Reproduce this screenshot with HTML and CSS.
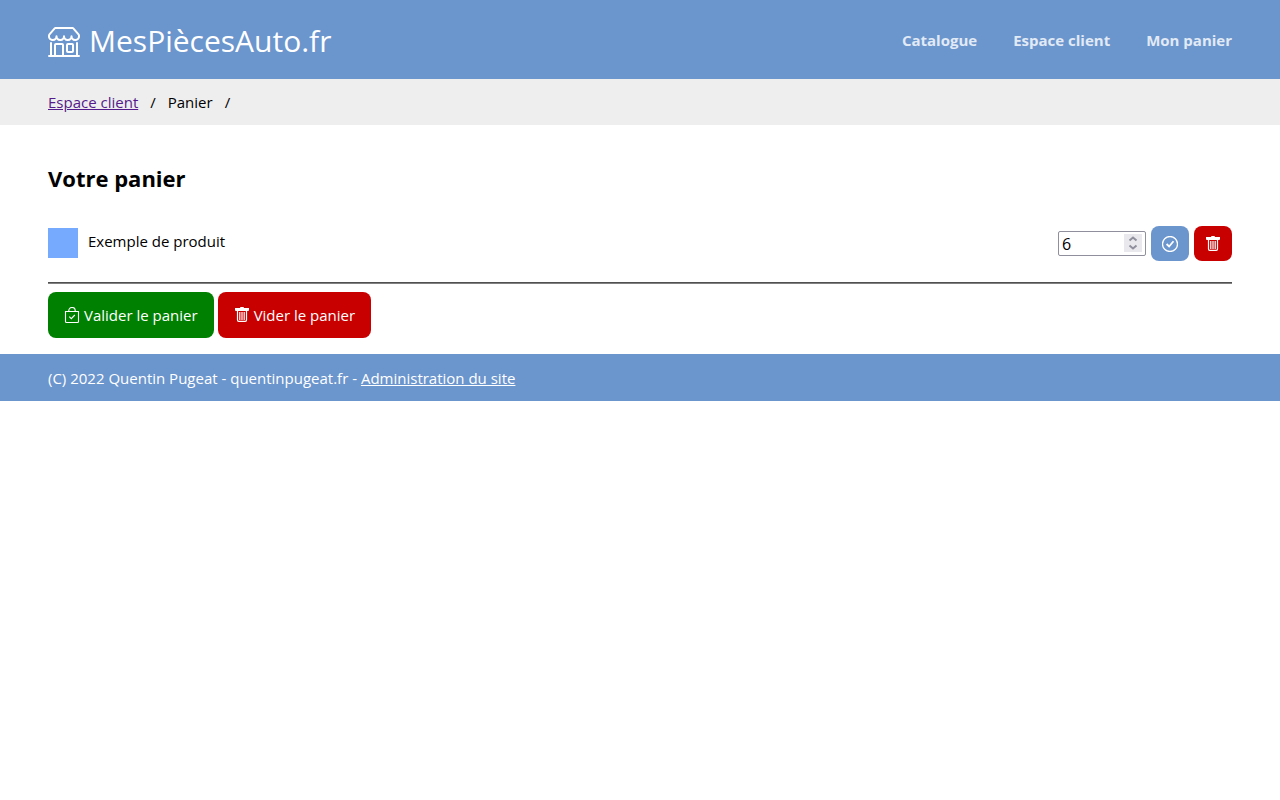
FILE: index.html
```html
<!DOCTYPE html>
<html lang="fr">
<head>
<meta charset="utf-8">
<meta name="viewport" content="width=device-width, initial-scale=1">
<title>MesPiècesAuto.fr</title>
<link rel="stylesheet" href="styles.css">
</head>
<body>
<svg class="sprite" aria-hidden="true">
  <symbol id="trash" viewBox="0 0 16 16">
    <path fill="currentColor" d="M1 1h5a1 1 0 0 1 1-1h2a1 1 0 0 1 1 1h5v2a1 1 0 0 1-1 1H2a1 1 0 0 1-1-1z"/>
    <path fill="none" stroke="currentColor" stroke-width="1.2" d="M3.5 3.5V13q0 1.3 1.2 1.3h6.6q1.2 0 1.2-1.3V3.5M5.8 5v8M8 5v8M10.2 5v8"/>
  </symbol>
</svg>
<header class="header">
  <a class="brand" href="#">
    <svg class="brand-icon" viewBox="0 0 16 16" fill="currentColor" aria-hidden="true"><path d="M2.97 1.35A1 1 0 0 1 3.73 1h8.54a1 1 0 0 1 .76.35l2.609 3.044A1.5 1.5 0 0 1 16 5.37v.255a2.375 2.375 0 0 1-4.25 1.458A2.371 2.371 0 0 1 9.875 8 2.37 2.37 0 0 1 8 7.083 2.37 2.37 0 0 1 6.125 8a2.37 2.37 0 0 1-1.875-.917A2.375 2.375 0 0 1 0 5.625V5.37a1.5 1.5 0 0 1 .361-.976l2.61-3.045zm1.78 4.275a1.375 1.375 0 0 0 2.75 0 .5.5 0 0 1 1 0 1.375 1.375 0 0 0 2.75 0 .5.5 0 0 1 1 0 1.375 1.375 0 1 0 2.75 0V5.37a.5.5 0 0 0-.12-.325L12.27 2H3.73L1.12 5.045A.5.5 0 0 0 1 5.37v.255a1.375 1.375 0 0 0 2.75 0 .5.5 0 0 1 1 0zM1.5 8.5A.5.5 0 0 1 2 9v6h1v-5a1 1 0 0 1 1-1h3a1 1 0 0 1 1 1v5h6V9a.5.5 0 0 1 1 0v6h.5a.5.5 0 0 1 0 1H.5a.5.5 0 0 1 0-1H1V9a.5.5 0 0 1 .5-.5zM4 15h3v-5H4v5zm5-5a1 1 0 0 1 1-1h2a1 1 0 0 1 1 1v3a1 1 0 0 1-1 1h-2a1 1 0 0 1-1-1v-3zm3 0h-2v3h2v-3z"/></svg>
    <span>MesPiècesAuto.fr</span>
  </a>
  <nav class="nav">
    <a href="#">Catalogue</a>
    <a href="#">Espace client</a>
    <a href="#">Mon panier</a>
  </nav>
</header>
<nav class="breadcrumb" aria-label="Fil d'Ariane">
  <a href="#">Espace client</a><span>/</span><span>Panier</span><span>/</span>
</nav>
<main class="main">
  <h1 class="title">Votre panier</h1>
  <div class="item">
    <span class="product">
      <span class="thumb"></span>
      <label class="name" for="qty">Exemple de produit</label>
    </span>
    <span class="qty">
      <input id="qty" class="qty-input" type="number" value="6">
      <svg class="spinner" viewBox="0 0 18 18" aria-hidden="true"><path d="M5.5 6.5 9 3.5l3.5 3M5.5 11.5l3.5 3 3.5-3"/></svg>
    </span>
    <button class="btn btn-small btn-blue" type="button" aria-label="Mettre à jour">
      <svg class="icon" viewBox="0 0 16 16" fill="none" stroke="currentColor" aria-hidden="true"><circle cx="8" cy="8" r="7.5" stroke-width="1.3"/><path stroke-width="1.8" d="m4.6 8 2.5 2.5 4.4-5.3"/></svg>
    </button>
    <button class="btn btn-small btn-red" type="button" aria-label="Supprimer">
      <svg class="icon" aria-hidden="true"><use href="#trash"/></svg>
    </button>
  </div>
  <hr class="rule">
  <div class="actions">
    <button class="btn btn-large btn-green" type="button">
      <svg class="icon" viewBox="0 0 16 16" fill="none" stroke="currentColor" aria-hidden="true"><path stroke-width="1.1" d="M1.5 4.5h13v10q0 1-1 1h-11q-1 0-1-1zM4.8 4.5V3.7a3.2 3.2 0 0 1 6.4 0v.8M5.3 9.6 7.3 11.6 10.8 8"/></svg>
      Valider le panier
    </button>
    <button class="btn btn-large btn-red" type="button">
      <svg class="icon" aria-hidden="true"><use href="#trash"/></svg>
      Vider le panier
    </button>
  </div>
</main>
<footer class="footer">(C) 2022 Quentin Pugeat - quentinpugeat.fr - <a href="#">Administration du site</a></footer>
</body>
</html>
```
FILE: styles.css
```css
* { box-sizing: border-box; }
body {
  margin: 0;
  background: #fff;
  color: #000;
  font: 15px/22px "Segoe UI", "Open Sans", sans-serif;
}
.sprite { display: none; }
.header {
  display: flex;
  align-items: center;
  justify-content: space-between;
  padding: 18px 48px;
  background: #6b95cd;
}
.brand {
  display: flex;
  align-items: center;
  gap: 9px;
  padding-top: 2px;
  color: #fff;
  font-size: 30px;
  line-height: 41px;
  text-decoration: none;
}
.brand-icon { width: 32px; height: 32px; }
.nav { display: flex; gap: 36px; }
.nav a { color: #e1eaf5; font-weight: 700; text-decoration: none; }
.breadcrumb {
  display: flex;
  gap: 12px;
  padding: 12px 48px;
  background: #eee;
}
.breadcrumb a { color: #551a8b; }
.main { padding: 37px 48px 16px; }
.title { margin: 0 0 31px; font-size: 22px; line-height: 33px; font-weight: 700; }
.item { display: flex; align-items: center; gap: 5px; }
.product { display: flex; flex: 1; gap: 10px; padding-bottom: 1px; }
.thumb { width: 30px; height: 30px; background: #75aaff; }
.name { padding-top: 2px; }
.qty { position: relative; display: flex; }
.qty-input {
  width: 88px;
  height: 25px;
  padding: 0 24px 0 3px;
  border: 1px solid #8f8f9d;
  border-radius: 2px;
  background: #fff;
  color: #000;
  font: inherit;
  font-size: 16px;
  appearance: textfield;
}
.qty-input::-webkit-inner-spin-button { display: none; }
.spinner {
  position: absolute;
  top: 3px;
  right: 4px;
  width: 18px;
  height: 18px;
  background: #e9e9ed;
  fill: none;
  stroke: #8f8f9d;
  stroke-width: 2;
  pointer-events: none;
}
.btn {
  display: flex;
  align-items: center;
  justify-content: center;
  gap: 4px;
  border: 0;
  border-radius: 8px;
  color: #fff;
  font: inherit;
}
.icon { width: 16px; height: 16px; }
.btn-small { padding: 10px 11px 9px; }
.btn-large { padding: 12px 16px; }
.btn-blue { background: #6b95cd; }
.btn-red { background: #c80000; }
.btn-green { background: #008000; }
.rule {
  height: 2px;
  margin: 21px 0 8px;
  border: 0;
  border-top: 1px solid #505050;
  background: #808080;
}
.actions { display: flex; gap: 4px; }
.footer { padding: 13px 48px 12px; background: #6b95cd; color: #fff; }
.footer a { color: #fff; }
```
